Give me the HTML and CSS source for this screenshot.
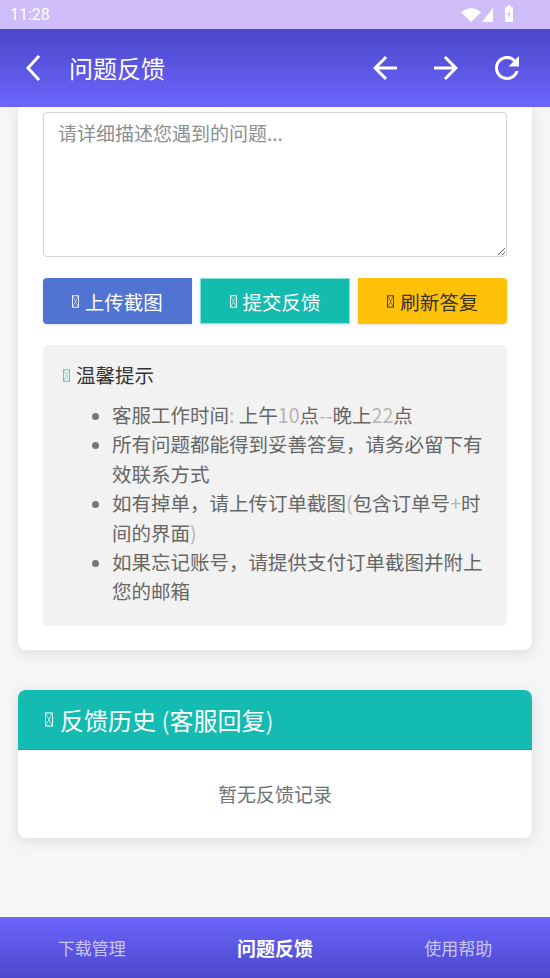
FILE: index.html
```html
<!DOCTYPE html>
<html lang="zh-CN">
<head>
<meta charset="utf-8">
<title>问题反馈</title>
<link rel="stylesheet" href="styles.css">
</head>
<body>
<div class="screen">
  <div class="statusbar">
    <span class="time">11:28</span>
    <div class="sys-icons">
      <svg class="wifi" width="20" height="14" viewBox="0 0 20 14"><path d="M0 4.2 Q10 -3.6 20 4.2 L10 14 Z" fill="#fff"/></svg>
      <svg class="signal" width="11" height="14" viewBox="0 0 11 14"><path d="M11 0 V14 H0 Z" fill="#fff"/></svg>
      <svg class="battery" width="8" height="17" viewBox="0 0 8 17"><rect x="2.5" y="0" width="3" height="2" fill="#fff"/><rect x="0" y="2" width="8" height="15" rx="1" fill="#fff"/><path d="M4.6 4.5 L2.4 10 H4 L3.4 14 L5.8 8.2 H4.2 Z" fill="#cfbdfa"/></svg>
    </div>
  </div>

  <header class="appbar">
    <svg class="back" width="20" height="30" viewBox="0 0 20 30"><polyline points="16,4 6,15 16,26" fill="none" stroke="#fff" stroke-width="3" stroke-linecap="square"/></svg>
    <h1 class="title">问题反馈</h1>
    <div class="actions">
      <svg width="36" height="36" viewBox="0 0 24 24"><path d="M20 11H7.83l5.59-5.59L12 4l-8 8 8 8 1.41-1.41L7.83 13H20v-2z" fill="#fff"/></svg>
      <svg width="36" height="36" viewBox="0 0 24 24"><path d="M12 4l-1.41 1.41L16.17 11H4v2h12.17l-5.58 5.59L12 20l8-8z" fill="#fff"/></svg>
      <svg width="36" height="36" viewBox="0 0 24 24"><path d="M17.65 6.35C16.2 4.9 14.21 4 12 4c-4.42 0-7.99 3.58-7.99 8s3.57 8 7.99 8c3.73 0 6.84-2.55 7.73-6h-2.08c-.82 2.33-3.04 4-5.65 4-3.31 0-6-2.69-6-6s2.69-6 6-6c1.66 0 3.14.69 4.22 1.78L13 11h7V4l-2.35 2.35z" fill="#fff"/></svg>
    </div>
  </header>

  <main class="content">
    <section class="card form-card">
      <textarea class="desc" placeholder="请详细描述您遇到的问题..."></textarea>
      <div class="btn-row">
        <button class="btn btn-blue"><svg class="tofu" viewBox="0 0 8 14"><rect x="0.5" y="0.5" width="7" height="13" fill="none" stroke="currentColor"/><path d="M1 1 L7 13 M7 1 L1 13" stroke="currentColor" stroke-width="0.6"/></svg><span>上传截图</span></button>
        <button class="btn btn-teal"><svg class="tofu" viewBox="0 0 8 14"><rect x="0.5" y="0.5" width="7" height="13" fill="none" stroke="currentColor"/><path d="M1 1 L7 13 M7 1 L1 13" stroke="currentColor" stroke-width="0.6"/></svg><span>提交反馈</span></button>
        <button class="btn btn-yellow"><svg class="tofu" viewBox="0 0 8 14"><rect x="0.5" y="0.5" width="7" height="13" fill="none" stroke="currentColor"/><path d="M1 1 L7 13 M7 1 L1 13" stroke="currentColor" stroke-width="0.6"/></svg><span>刷新答复</span></button>
      </div>
      <div class="tips">
        <div class="tips-title"><svg class="tofu tofu-teal" viewBox="0 0 8 14"><rect x="0.5" y="0.5" width="7" height="13" fill="none" stroke="currentColor"/><path d="M1 1 L7 13 M7 1 L1 13" stroke="currentColor" stroke-width="0.6"/></svg><span>温馨提示</span></div>
        <ul class="tips-list">
          <li>客服工作时间<span class="thin">: </span>上午<span class="thin">10</span>点<span class="thin">--</span>晚上<span class="thin">22</span>点</li>
          <li>所有问题都能得到妥善答复，请务必留下有效联系方式</li>
          <li>如有掉单，请上传订单截图<span class="thin">(</span>包含订单号<span class="thin">+</span>时间的界面<span class="thin">)</span></li>
          <li>如果忘记账号，请提供支付订单截图并附上您的邮箱</li>
        </ul>
      </div>
    </section>

    <section class="card history">
      <div class="history-head"><svg class="tofu" viewBox="0 0 8 14"><rect x="0.5" y="0.5" width="7" height="13" fill="none" stroke="currentColor"/><path d="M1 1 L7 13 M7 1 L1 13" stroke="currentColor" stroke-width="0.6"/></svg><span>反馈历史 <span class="thin-w">(</span>客服回复<span class="thin-w">)</span></span></div>
      <div class="history-body">暂无反馈记录</div>
    </section>
  </main>

  <nav class="tabbar">
    <a class="tab">下载管理</a>
    <a class="tab active">问题反馈</a>
    <a class="tab">使用帮助</a>
  </nav>
</div>
</body>
</html>
```

FILE: styles.css
```css
* { box-sizing: border-box; }
html, body { margin: 0; padding: 0; }
body {
  width: 550px;
  height: 978px;
  overflow: hidden;
  font-family: "Noto Sans CJK SC", "Noto Sans", sans-serif;
  background: #f5f6f8;
}
.screen {
  height: 978px;
  display: flex;
  flex-direction: column;
}

/* status bar */
.statusbar {
  height: 29px;
  flex: 0 0 29px;
  background: #cfbdfa;
  display: flex;
  align-items: center;
  justify-content: space-between;
  padding: 0 37px 0 10px;
}
.time {
  font-family: Roboto, "Noto Sans", sans-serif;
  font-size: 16px;
  color: #fff;
  line-height: 1;
}
.sys-icons {
  display: flex;
  align-items: center;
  height: 29px;
}
.wifi { margin-top: 1px; }
.signal { margin-left: 1px; margin-top: 1px; }
.battery { margin-left: 12px; margin-top: -2px; }

/* app bar */
.appbar {
  height: 78px;
  flex: 0 0 78px;
  background: linear-gradient(180deg, #4a47ca 0%, #6b65fb 100%);
  display: flex;
  align-items: center;
  padding: 0 25px 0 22px;
}
.back { display: block; }
.title {
  margin: 0 0 0 27px;
  font-size: 24px;
  font-weight: 400;
  color: #fff;
  line-height: 30px;
  flex: 1;
}
.actions {
  display: flex;
  gap: 25px;
}
.actions svg { display: block; }

/* content */
.content {
  flex: 1;
  overflow: hidden;
  padding: 0 18px;
  background: #f5f6f8;
}
.card {
  background: #fff;
  border-radius: 8px;
  box-shadow: 0 3px 14px rgba(0, 0, 0, 0.11);
}
.form-card {
  border-radius: 0 0 8px 8px;
  padding: 5px 25px 24px;
}
.desc {
  display: block;
  width: 100%;
  height: 145px;
  border: 1px solid #cfd2d6;
  border-radius: 4px;
  padding: 7px 14px;
  font-family: "Noto Sans CJK SC", "Noto Sans", sans-serif;
  font-size: 19px;
  line-height: 26px;
  color: #333;
  background: #fff;
}
.desc::placeholder { color: #8a8d91; }

.btn-row {
  display: flex;
  gap: 8px;
  margin-top: 21px;
}
.btn {
  flex: 1;
  height: 46px;
  border: 0;
  font-family: "Noto Sans CJK SC", "Noto Sans", sans-serif;
  font-size: 19.5px;
  display: flex;
  align-items: center;
  justify-content: center;
  gap: 6px;
  box-shadow: 0 1px 3px rgba(0, 0, 0, 0.12);
  padding: 0;
}
.btn-blue { background: #5173d1; color: #fff; border-radius: 4px 0 0 4px; }
.btn-teal { background: #14bcb0; color: #fff; border: 1px solid #8be0da; }
.btn-yellow { background: #ffc107; color: #333; border-radius: 0 4px 4px 0; }

.tofu {
  width: 7px;
  height: 13px;
  display: block;
  flex: 0 0 auto;
}
.tofu-teal { color: #3cc9c0; }

.tips {
  margin-top: 21px;
  background: #f2f2f2;
  border-radius: 5px;
  padding: 18px 20px 20px;
}
.tips-title {
  font-size: 19.5px;
  line-height: 24px;
  color: #333;
  display: flex;
  align-items: center;
  gap: 6px;
}
.tips-list {
  margin: 13px 0 0;
  padding: 0 0 0 49px;
  font-size: 19.5px;
  line-height: 29.4px;
  color: #666;
}
.tips-list li::marker { color: #777; font-size: 17px; }
.thin { color: #b5b5b5; }

/* history */
.history {
  margin-top: 40px;
  overflow: hidden;
}
.history-head {
  height: 60px;
  background: #14bbb0;
  color: #fff;
  font-size: 24px;
  display: flex;
  align-items: center;
  gap: 7px;
  padding-left: 27px;
  border-bottom: 1px solid #10a99f;
}
.history-head .tofu { width: 8px; height: 15px; }
.thin-w { color: #d8f4f2; }
.history-body {
  height: 88px;
  display: flex;
  align-items: center;
  justify-content: center;
  font-size: 19px;
  color: #6e7379;
}

/* tab bar */
.tabbar {
  height: 61px;
  flex: 0 0 61px;
  background: linear-gradient(180deg, #6b65fb 0%, #4c48cc 100%);
  display: grid;
  grid-template-columns: 1fr 1fr 1fr;
  align-items: center;
}
.tab {
  text-align: center;
  font-size: 17px;
  color: rgba(255, 255, 255, 0.68);
  line-height: 24px;
}
.tab.active {
  color: #fff;
  font-weight: 700;
  font-size: 19px;
}
```
